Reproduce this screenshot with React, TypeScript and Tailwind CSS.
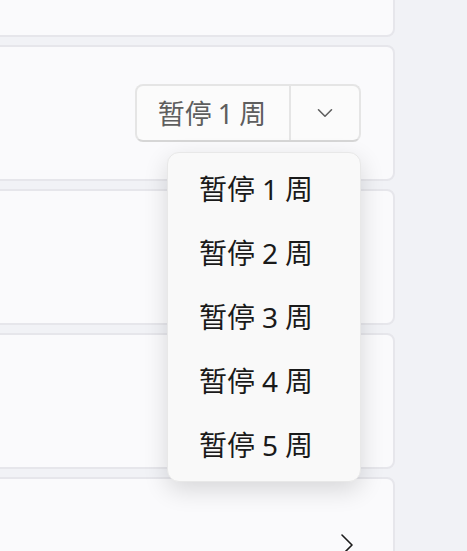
import { useState } from 'react';

const weeks = [1, 2, 3, 4, 5];

function ChevronDown() {
  return (
    <svg width="16" height="10" viewBox="0 0 16 10" fill="none">
      <path d="M1.5 1.8 L8 8.2 L14.5 1.8" stroke="#5f5f5f" strokeWidth="1.6" strokeLinecap="round" strokeLinejoin="round" />
    </svg>
  );
}

function ChevronRight() {
  return (
    <svg width="14" height="24" viewBox="0 0 14 24" fill="none">
      <path d="M2 2 L12 12 L2 22" stroke="#1b1b1b" strokeWidth="1.6" strokeLinecap="round" strokeLinejoin="round" />
    </svg>
  );
}

export default function App() {
  const [open] = useState(true);

  return (
    <div
      className="w-[467px] h-[551px] overflow-hidden bg-[#f1f2f6]"
      style={{ fontFamily: '"Noto Sans", "Noto Sans CJK SC", sans-serif' }}
    >
      <div className="-mt-[99px] -ml-[12px] w-[407px] flex flex-col gap-[8px]">
        <div className="h-[136px] rounded-[8px] border-2 border-[#e6e6eb] bg-[#fafafc]" />

        <div className="relative h-[136px] rounded-[8px] border-2 border-[#e6e6eb] bg-[#fafafc] flex items-center justify-end pr-[32px]">
          <div className="flex h-[58px] rounded-[8px] border-2 border-[#e5e5e5] border-b-[#d6d6d6] bg-[#fbfbfb]">
            <div className="w-[154px] flex items-center justify-center text-[27px] leading-none text-[#5e5e5e] border-r-2 border-[#e5e5e5]">
              <span className="-ml-[2px]">暂停<span className="ml-[6px]">1</span><span className="ml-[6px]">周</span></span>
            </div>
            <div className="w-[68px] flex items-center justify-center">
              <ChevronDown />
            </div>
          </div>

          {open && (
            <div className="absolute z-10 left-[177px] top-[105px] w-[194px] rounded-[12px] border border-[#e8e8e8] bg-[#f9f9f9] py-[4px] shadow-[0_8px_24px_rgba(0,0,0,0.14)]">
              {weeks.map((w) => (
                <div key={w} className="h-[64px] flex items-center pl-[31px] text-[28px] leading-none text-[#1a1a1a]">
                  暂停<span className="ml-[7px]">{w}</span><span className="ml-[7px]">周</span>
                </div>
              ))}
            </div>
          )}
        </div>

        <div className="h-[136px] rounded-[8px] border-2 border-[#e6e6eb] bg-[#fafafc]" />
        <div className="h-[136px] rounded-[8px] border-2 border-[#e6e6eb] bg-[#fafafc]" />
        <div className="h-[136px] rounded-[8px] border-2 border-[#e6e6eb] bg-[#fafafc] flex items-center justify-end pr-[39px]">
          <ChevronRight />
        </div>
      </div>
    </div>
  );
}
